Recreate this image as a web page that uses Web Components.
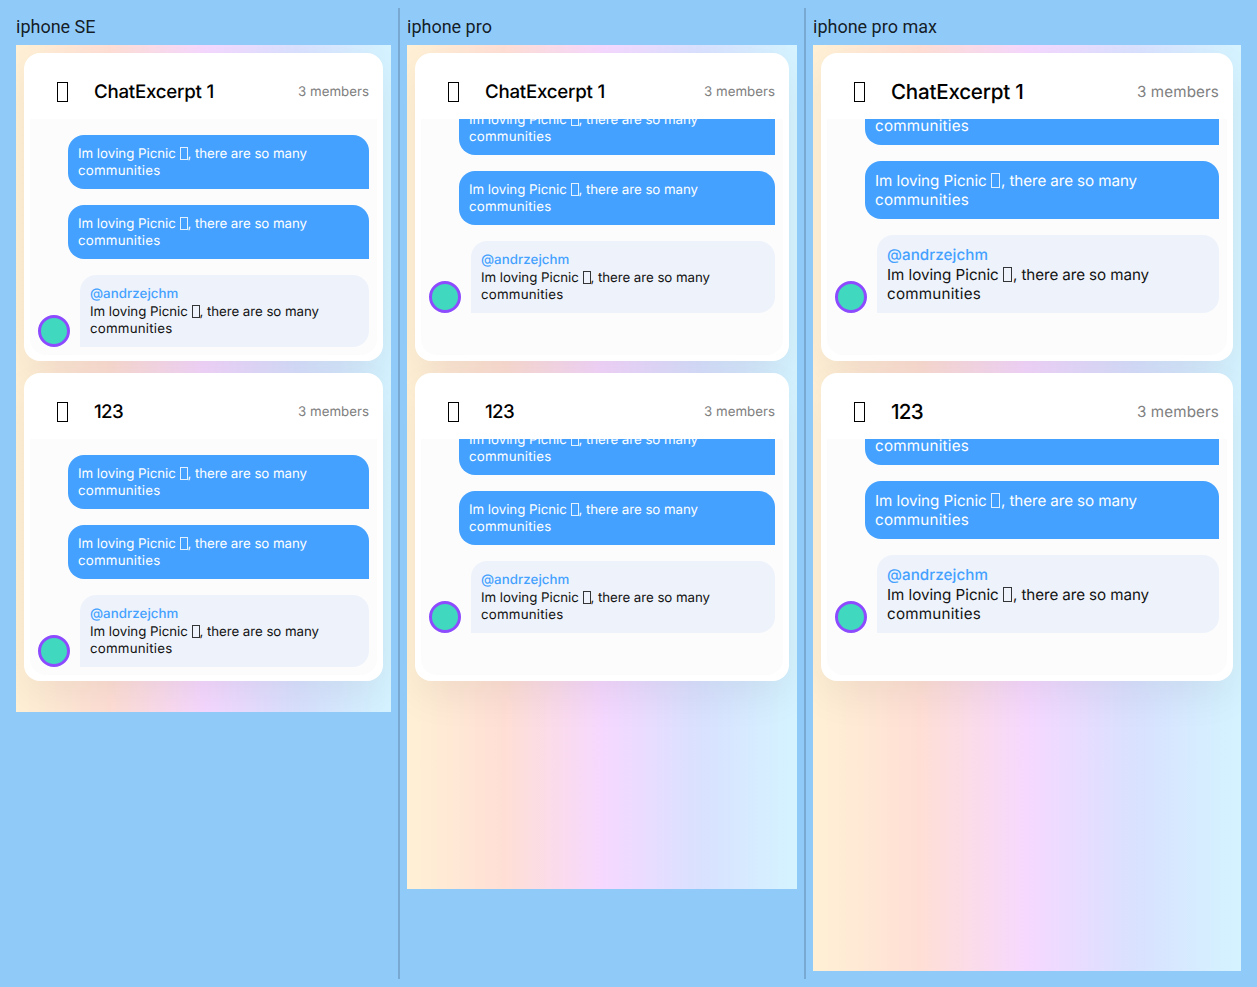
<!DOCTYPE html>
<html lang="en">
<head>
<meta charset="utf-8">
<title>Chat excerpts</title>
<style>
html,body{margin:0;height:100%;background:#90caf9}
body{font-family:Inter,"Open Sans",sans-serif;overflow:hidden}
</style>
</head>
<body>
<device-board></device-board>
<script>
function define(name, html, setup) {
  const template = document.createElement('template');
  template.innerHTML = html;
  customElements.define(name, class extends HTMLElement {
    constructor() {
      super();
      this.attachShadow({ mode: 'open' }).append(template.content.cloneNode(true));
    }
    connectedCallback() { if (setup) setup(this, this.shadowRoot); }
  });
}

// A run of text whose tracking is adjusted to fill the width in its "w" attribute.
define('fit-text', `<style>
:host{display:inline-block;white-space:pre;text-rendering:geometricPrecision}
span{display:inline-block}
</style><span><slot></slot></span>`, (el, root) => {
  const w = +el.getAttribute('w'), run = root.querySelector('span');
  run.style.letterSpacing = '0';
  const natural = run.getBoundingClientRect().width;
  run.style.letterSpacing = (w - natural) / el.textContent.length + 'px';
  el.style.width = w + 'px';
});

define('empty-glyph', `<style>
:host{display:inline-block;box-sizing:border-box;width:.6em;height:1em;border:1px solid currentColor}
</style>`);

// "tail" keeps only the last line: the first one is scrolled out of view.
define('message-text', `<style>
:host{display:block;font-size:var(--body-font);line-height:var(--line);font-weight:380}
.row{display:flex;height:var(--line);white-space:pre}
fit-text{line-height:var(--text-line)}
empty-glyph{width:var(--gw);height:var(--gh);margin:2px var(--gr) 0 0;opacity:.85}
</style><div class="row"></div><div class="row"></div>`, (el, root) => {
  const big = el.hasAttribute('big'), rows = root.querySelectorAll('.row');
  const a = big ? [116, 136, 94] : [101.5, 119.5, 82.5];
  if (!el.hasAttribute('tail'))
    rows[0].innerHTML = `<fit-text w="${a[0]}">Im loving Picnic </fit-text><empty-glyph></empty-glyph><fit-text w="${a[1]}">, there are so many</fit-text>`;
  rows[1].innerHTML = `<fit-text w="${a[2]}">communities</fit-text>`;
});

define('sent-message', `<style>
:host{display:block;box-sizing:border-box;flex:none;margin-left:38px;padding:10px;background:#44a1ff;color:#fff;border-radius:16px 16px 0 16px}
</style><slot></slot>`);

define('received-message', `<style>
:host{display:flex;flex:none;align-items:flex-end;gap:10px;margin-left:8px}
.avatar{box-sizing:border-box;flex:none;width:32px;height:32px;border:3px solid #8c4bff;border-radius:50%;background:#40d9bf}
.bubble{flex:1;padding:10px;background:#eef3fb;color:#121212;border-radius:16px 16px 16px 0}
.name{height:var(--name-h);line-height:var(--line);font-size:var(--body-font);font-weight:500;color:#44a1ff}
</style><div class="avatar"></div><div class="bubble"><div class="name"><slot name="author"></slot></div><slot></slot></div>`);

define('chat-card', `<style>
:host{display:flex;flex-direction:column;box-sizing:border-box;height:308px;padding:0 6px 6px;background:#fff;border-radius:16px;box-shadow:0 16px 40px rgba(0,0,0,.06)}
header{flex:none;display:flex;align-items:center;height:66px;padding:11px 8px 0 27px;box-sizing:border-box;color:#000}
empty-glyph{width:11px;height:20px;flex:none}
.title{margin-left:26px;font-size:var(--title-font);font-weight:500;line-height:24px}
.members{margin-left:auto;font-size:var(--body-font);color:#808080;font-weight:380}
.list{flex:1;min-height:0;overflow:hidden;border-radius:0 0 16px 16px;background:#fcfcfc}
.stack{display:flex;flex-direction:column;gap:16px;padding-right:8px;margin-top:var(--scroll)}
</style><header><empty-glyph></empty-glyph><div class="title"><slot name="title"></slot></div><div class="members"><slot name="members"></slot></div></header>
<div class="list"><div class="stack"><slot></slot></div></div>`);

define('phone-frame', `<style>
:host{display:block}
.label{height:37px;box-sizing:border-box;padding-top:8px;font:18px/21px Roboto,sans-serif;color:rgba(0,0,0,.87)}
.screen{display:flex;flex-direction:column;gap:12px;box-sizing:border-box;padding:8px;overflow:hidden;background:linear-gradient(90deg,#fff1d5,#ffdfd5 25%,#f6d8ff 50%,#d9e1ff 75%,#d4f3ff)}
</style><div class="label"><slot name="label"></slot></div><div class="screen"></div>`, (el, root) => {
  const big = el.hasAttribute('big'), b = big ? 'big' : '';
  const vars = big
    ? { 'body-font': '15.2px', 'title-font': '20.6px', line: '19px', 'text-line': '19px', 'name-h': '20px', gw: '9px', gh: '15px', gr: '1px' }
    : { 'body-font': '13.3px', 'title-font': '18.7px', line: '17px', 'text-line': '19px', 'name-h': '18px', gw: '8px', gh: '13px', gr: '0px' };
  for (const k in vars) el.style.setProperty('--' + k, vars[k]);
  el.style.setProperty('--scroll', el.getAttribute('scroll') + 'px');
  const screen = root.querySelector('.screen');
  el.style.width = el.getAttribute('width') + 'px';
  screen.style.height = el.getAttribute('height') + 'px';
  const card = (title, w) => `<chat-card>
    <fit-text slot="title" w="${w}">${title}</fit-text><fit-text slot="members" w="${big ? 82 : 71}">3 members</fit-text>
    <sent-message><message-text ${b} ${big ? 'tail' : ''}></message-text></sent-message>
    <sent-message><message-text ${b}></message-text></sent-message>
    <received-message><fit-text slot="author" w="${big ? 101 : 88.5}">@andrzejchm</fit-text><message-text ${b}></message-text></received-message>
  </chat-card>`;
  screen.innerHTML = card('ChatExcerpt 1', big ? 132.5 : 120) + card('123', big ? 32 : 29);
});

define('device-board', `<style>
:host{display:flex;padding:8px 16px;height:971px;gap:7px}
.rule{width:2px;height:971px;background:#78a9d3}
</style>
<phone-frame width="375" height="667" scroll="16"><span slot="label">iphone SE</span></phone-frame>
<div class="rule"></div>
<phone-frame width="390" height="844" scroll="-18"><span slot="label">iphone pro</span></phone-frame>
<div class="rule"></div>
<phone-frame big width="428" height="926" scroll="-32"><span slot="label">iphone pro max</span></phone-frame>`);
</script>
</body>
</html>
